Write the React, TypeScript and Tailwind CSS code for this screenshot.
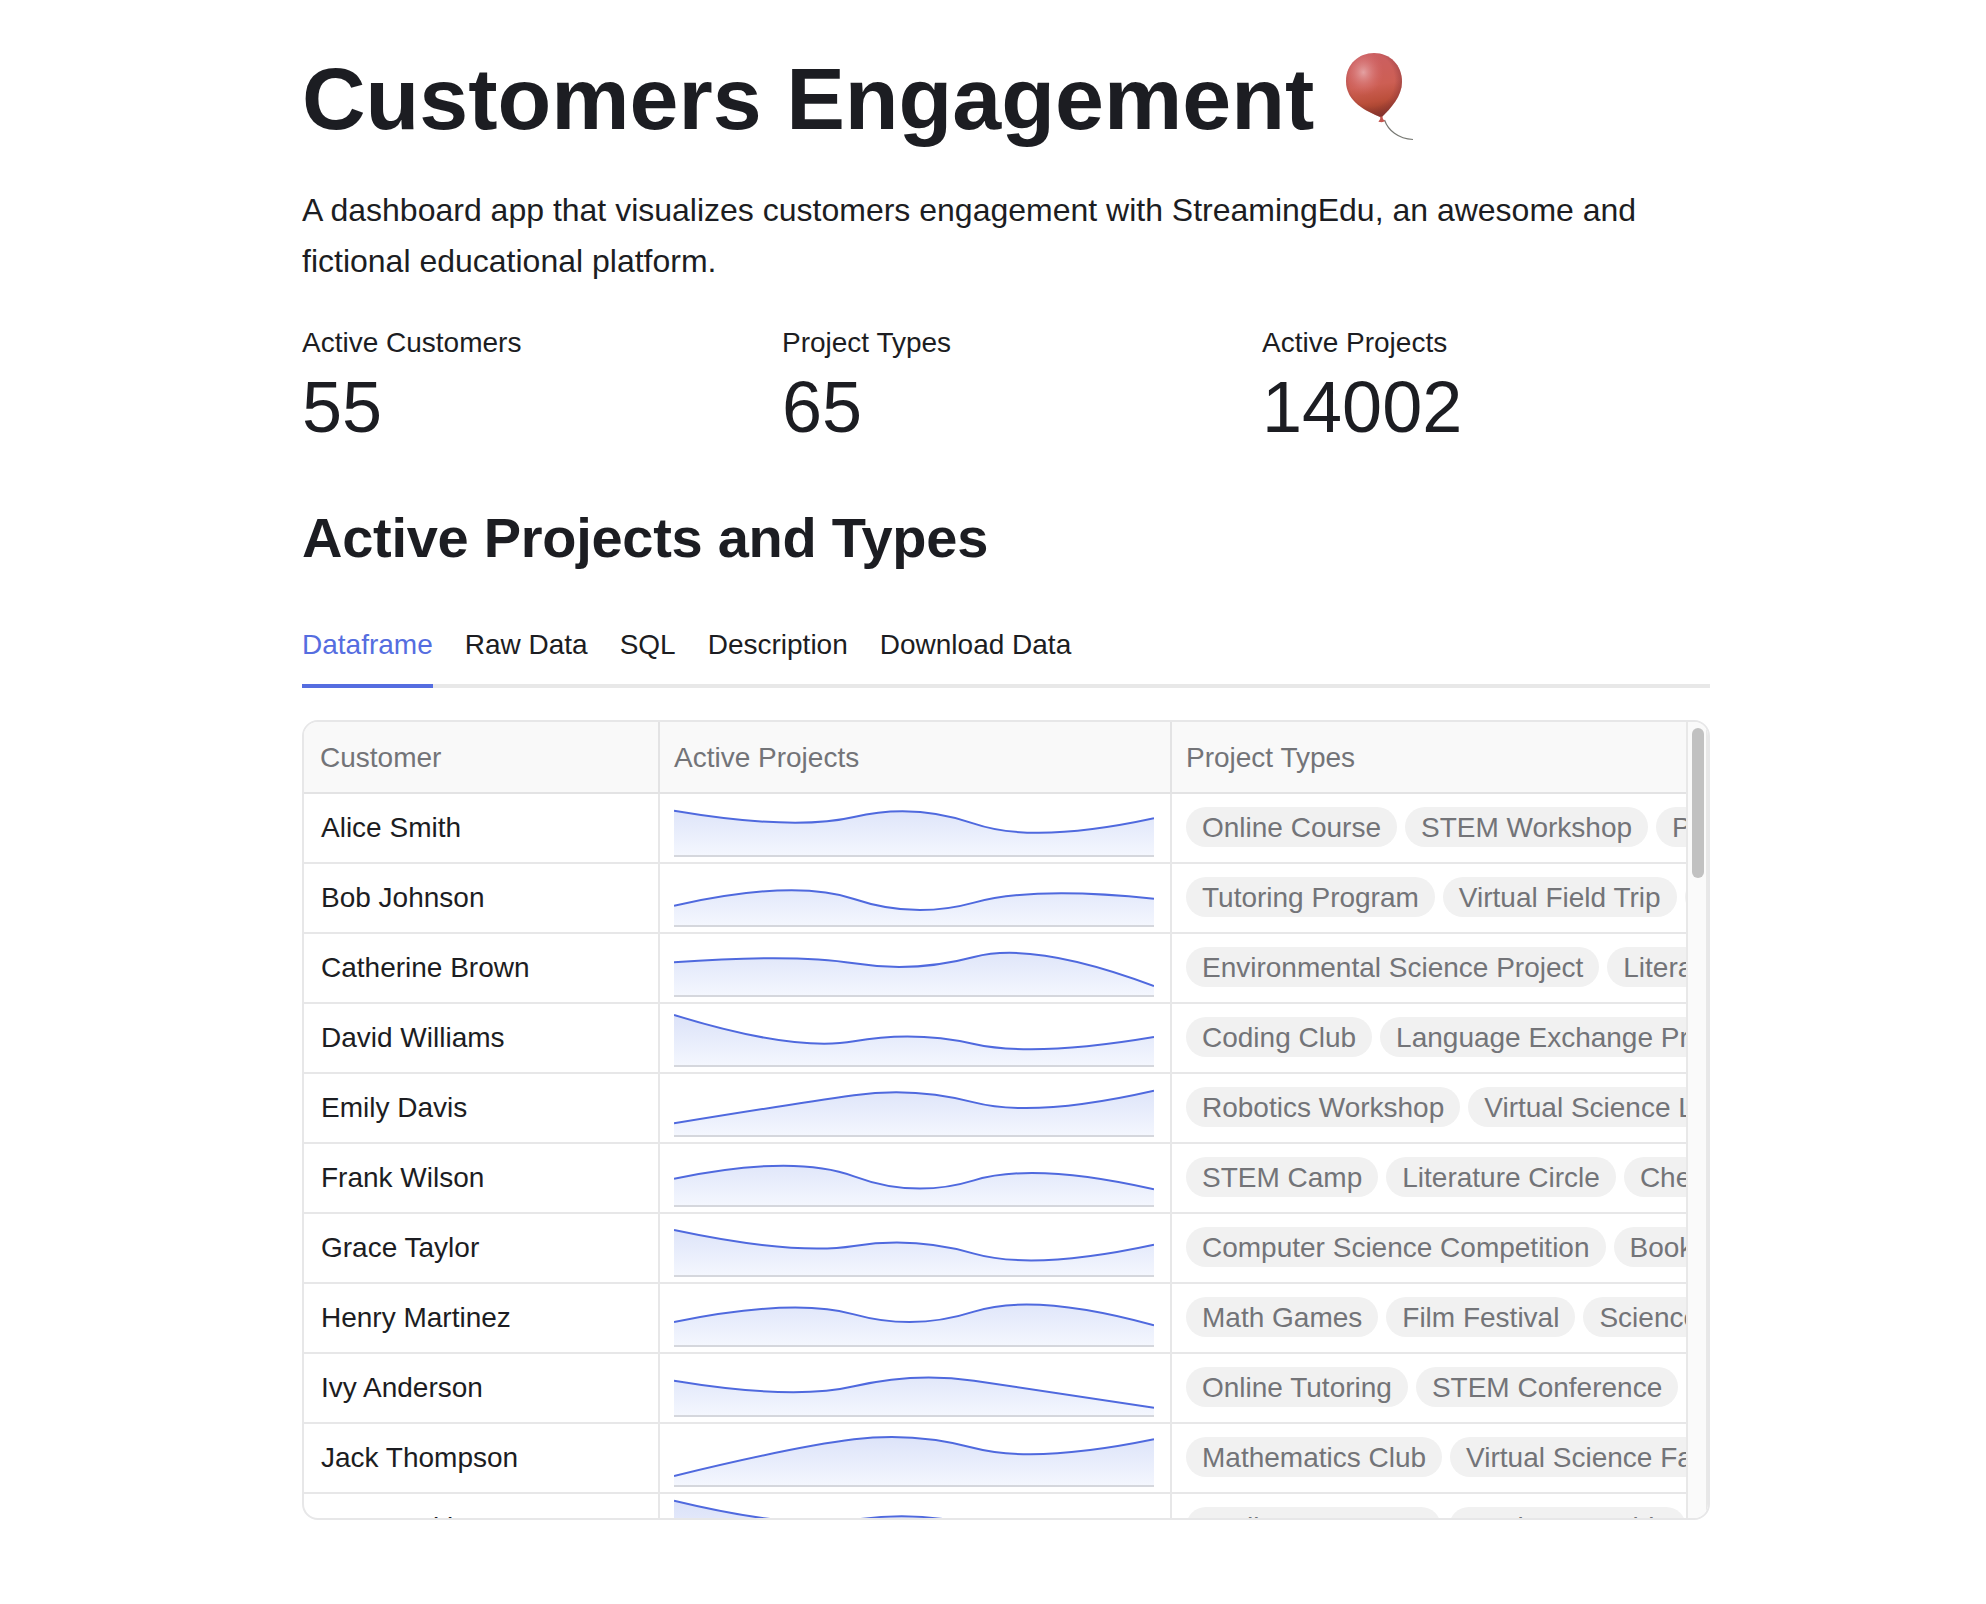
type Row = { name: string; points: number[]; types: string[] };

// Sparkline points are heights in pixels above the baseline.
const rows: Row[] = [
  { name: "Alice Smith", points: [45.3, 25, 53, 11.7, 37.7], types: ["Online Course", "STEM Workshop", "Photography Club"] },
  { name: "Bob Johnson", points: [20.3, 47.3, 6.8, 40, 27.3], types: ["Tutoring Program", "Virtual Field Trip", "Art Contest"] },
  { name: "Catherine Brown", points: [33.7, 42.3, 23, 55, 10], types: ["Environmental Science Project", "Literature Club"] },
  { name: "David Williams", points: [51, 14, 35.3, 8.7, 29], types: ["Coding Club", "Language Exchange Program"] },
  { name: "Emily Davis", points: [12.7, 32.3, 49.3, 18, 45.3], types: ["Robotics Workshop", "Virtual Science Lab"] },
  { name: "Frank Wilson", points: [27.3, 52, 7.3, 44, 16.7], types: ["STEM Camp", "Literature Circle", "Chess Club"] },
  { name: "Grace Taylor", points: [46, 20.5, 39.5, 5.3, 31.3], types: ["Computer Science Competition", "Book Club"] },
  { name: "Henry Martinez", points: [24, 48.3, 15, 53.7, 20.7], types: ["Math Games", "Film Festival", "Science Fair"] },
  { name: "Ivy Anderson", points: [35.3, 15.5, 44, 26.7, 8.3], types: ["Online Tutoring", "STEM Conference", "Debate Club"] },
  { name: "Jack Thompson", points: [10, 39.3, 54, 22, 46.7], types: ["Mathematics Club", "Virtual Science Fair"] },
  { name: "Jane Perkins", points: [55.3, 26.3, 45.7, 16.3, 30], types: ["Coding Bootcamp", "Music Ensemble", "Science Quiz"] },
];

const metrics = [
  { label: "Active Customers", value: "55" },
  { label: "Project Types", value: "65" },
  { label: "Active Projects", value: "14002" },
];

const tabs = ["Dataframe", "Raw Data", "SQL", "Description", "Download Data"];

const BASE = 62;

function Sparkline({ points }: { points: number[] }) {
  const step = 480 / (points.length - 1);
  const p = points.map((h, i) => [i * step, BASE - h]);
  let line = `M${p[0][0]} ${p[0][1]}`;
  for (let i = 1; i < p.length - 2; i++) {
    line += ` Q${p[i][0]} ${p[i][1]} ${(p[i][0] + p[i + 1][0]) / 2} ${(p[i][1] + p[i + 1][1]) / 2}`;
  }
  const a = p[p.length - 2];
  const b = p[p.length - 1];
  line += ` Q${a[0]} ${a[1]} ${b[0]} ${b[1]}`;
  return (
    <svg width="480" height="68" viewBox="0 0 480 68" className="block shrink-0">
      <path d={`${line} L480 ${BASE} L0 ${BASE} Z`} fill="url(#spark-fill)" />
      <rect x="0" y={BASE - 1} width="480" height="2" fill="#d5d7dd" />
      <path d={line} fill="none" stroke="#4f69de" strokeWidth="2" />
    </svg>
  );
}

const BODY = "M28 1 C44 1 56 13 56 30 C56 44 45 56 35.4 65.5 C20 59 0 50 0 29 C0 12 13 1 28 1 Z";

function Balloon() {
  return (
    <svg width="80" height="90" viewBox="0 0 80 90" className="ml-[32px] mt-[6px] block shrink-0">
      <defs>
        <linearGradient id="skin" x1="0.4" y1="0" x2="0.55" y2="1">
          <stop offset="0" stopColor="#cb5f62" />
          <stop offset="0.5" stopColor="#cd5f54" />
          <stop offset="0.75" stopColor="#bb4f3b" />
          <stop offset="1" stopColor="#8c3520" />
        </linearGradient>
        <radialGradient id="edge" cx="0.46" cy="0.42" r="0.58">
          <stop offset="0.7" stopColor="#7d3038" stopOpacity="0" />
          <stop offset="1" stopColor="#7d3038" stopOpacity="0.55" />
        </radialGradient>
        <radialGradient id="shine" cx="0.31" cy="0.3" r="0.36">
          <stop offset="0" stopColor="#e5a5a6" stopOpacity="0.95" />
          <stop offset="1" stopColor="#d8696a" stopOpacity="0" />
        </radialGradient>
      </defs>
      <path d="M38.5 68 C42 78 52 87 67 87.5" fill="none" stroke="#777873" strokeWidth="1.2" />
      <path d={BODY} fill="url(#skin)" />
      <path d={BODY} fill="url(#edge)" />
      <path d={BODY} fill="url(#shine)" />
      <path d="M34.2 64.5 L36.4 64.5 L37 67 L39 69.3 L35.8 70.3 L32.4 69.8 L34.2 67 Z" fill="#c5564f" />
    </svg>
  );
}

export default function App() {
  return (
    <div className="h-[1604px] w-[1986px] overflow-hidden bg-white pl-[302px] pt-[46px] font-['Liberation_Sans',Arial,sans-serif] text-[#1c1d22]">
      <svg width="0" height="0" className="absolute">
        <defs>
          <linearGradient id="spark-fill" gradientUnits="userSpaceOnUse" x1="0" y1="6" x2="0" y2="62">
            <stop offset="0" stopColor="#d9e0f8" />
            <stop offset="1" stopColor="#f4f7fe" />
          </linearGradient>
        </defs>
      </svg>
      <main className="w-[1408px]">
        <div className="flex h-[106px] items-start">
          <h1 className="whitespace-nowrap text-[88px] font-bold leading-[106px]">Customers Engagement</h1>
          <Balloon />
        </div>
        <p className="mt-[33px] h-[103px] text-[32px] leading-[51.2px]">
          A dashboard app that visualizes customers engagement with StreamingEdu, an awesome and
          <br />
          fictional educational platform.
        </p>
        <section className="mt-8 grid grid-cols-3 gap-8">
          {metrics.map((m) => (
            <div key={m.label}>
              <div className="h-11 text-[28px] leading-[45px]">{m.label}</div>
              <div className="text-[72px] leading-[86px]">{m.value}</div>
            </div>
          ))}
        </section>
        <h2 className="mt-[54px] text-[56px] font-bold leading-[67px] tracking-[-0.005em]">Active Projects and Types</h2>
        <nav className="mt-[33px] flex h-[84px] gap-8 bg-[linear-gradient(#e8e8e8,#e8e8e8)] bg-[length:100%_4px] bg-bottom bg-no-repeat text-[28px]">
          {tabs.map((t, i) => (
            <div
              key={t}
              className={
                i === 0
                  ? "flex items-center border-b-4 border-[#556de0] pt-[2px] text-[#556de0]"
                  : "flex items-center border-b-4 border-transparent pt-[2px]"
              }
            >
              {t}
            </div>
          ))}
        </nav>
        <div className="mt-8 flex h-[800px] overflow-hidden rounded-[16px] border-2 border-[#e7e7e8] text-[28px]">
          <div className="w-[1382px] shrink-0 overflow-hidden">
            <div className="flex h-[72px] border-b-2 border-[#e3e3e4] bg-[#f9f9f9] text-[#737478]">
              <div className="flex w-[356px] shrink-0 items-center border-r-2 border-[#e3e3e4] pl-4 pt-[2px]">Customer</div>
              <div className="flex w-[512px] shrink-0 items-center border-r-2 border-[#e3e3e4] pl-[14px] pt-[2px]">Active Projects</div>
              <div className="flex items-center pl-[14px] pt-[2px]">Project Types</div>
            </div>
            {rows.map((r) => (
              <div key={r.name} className="flex h-[70px] border-b-2 border-[#e7e7e8]">
                <div className="flex w-[356px] shrink-0 items-center border-r-2 border-[#e7e7e8] pl-[17px]">{r.name}</div>
                <div className="flex w-[512px] shrink-0 border-r-2 border-[#e7e7e8] pl-[14px]">
                  <Sparkline points={r.points} />
                </div>
                <div className="flex items-center gap-2 overflow-hidden pb-[2px] pl-[14px]">
                  {r.types.map((t) => (
                    <span key={t} className="flex h-10 shrink-0 items-center whitespace-nowrap rounded-full bg-[#f1f1f1] px-4 pt-[2px] text-[#737478]">
                      {t}
                    </span>
                  ))}
                </div>
              </div>
            ))}
          </div>
          <div className="w-[22px] shrink-0 border-x-2 border-[#e8e8e8] bg-[#fafafa] pl-1 pt-[6px]">
            <div className="h-[150px] w-3 rounded-full bg-[#c1c1c1]" />
          </div>
        </div>
      </main>
    </div>
  );
}
